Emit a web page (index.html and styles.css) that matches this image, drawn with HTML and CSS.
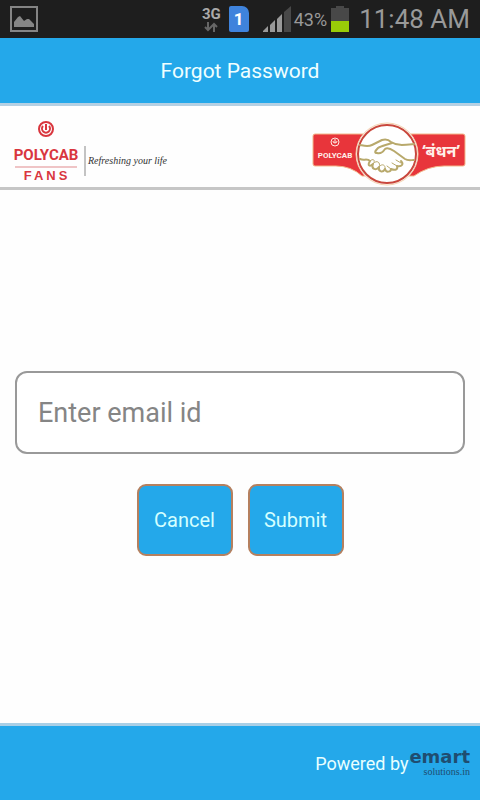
FILE: index.html
```html
<!DOCTYPE html>
<html lang="en">

<head>
    <meta charset="UTF-8">
    <meta name="viewport" content="width=device-width, initial-scale=1.0">
    <title>Forgot Password</title>
    <link rel="stylesheet" href="styles.css">
</head>

<body>
    <!-- Status bar -->
    <div class="status-bar">
        <svg class="status-picture" width="28" height="26" viewBox="0 0 28 26">
            <rect x="1" y="1" width="26" height="24" fill="none" stroke="#858585" stroke-width="2" />
            <path d="M4 21V16L8 11L10 10L14 15L17 13L19 13L21 15L24 18V21Z" fill="#858585" />
        </svg>
        <div class="network">
            <span>3G</span>
            <svg width="16" height="10" viewBox="0 0 16 10">
                <path d="M5 0V8M2 5L5 8L8 5M11 10V2M8 5L11 2L14 5" fill="none" stroke="#666" stroke-width="2" />
            </svg>
        </div>
        <div class="sim">1</div>
        <svg class="signal" width="28" height="26" viewBox="0 0 28 26">
            <path d="M0 26V25L5 20V26Z" fill="#999" />
            <path d="M7 26V19L12 14V26Z" fill="#999" />
            <path d="M14 26V13L19 8V26Z" fill="#999" />
            <path d="M21 26V6L28 0V26Z" fill="#484848" />
        </svg>
        <span class="percent">43%</span>
        <svg class="battery" width="18" height="26" viewBox="0 0 18 26">
            <path d="M5 0H13V2H18V15H0V2H5Z" fill="#484848" />
            <rect y="15" width="18" height="11" fill="#99cc08" />
        </svg>
        <span class="clock">11:48 AM</span>
    </div>

    <!-- Header -->
    <header>
        <h1>Forgot Password</h1>
    </header>

    <!-- Logos -->
    <div class="logos">
        <svg class="fans-logo" width="160" height="66" viewBox="0 0 160 66" role="img" aria-label="Polycab Fans, refreshing your life">
            <circle cx="32" cy="8" r="7" fill="none" stroke="#d9363e" stroke-width="2" />
            <path d="M29 5A4 4 0 1 0 35 5M32 3V9" fill="none" stroke="#d9363e" stroke-width="2" />
            <text class="fans-name" x="32" y="39">POLYCAB</text>
            <path d="M1 46H63" stroke="#e08a8d" />
            <text class="fans-sub" x="33" y="59">FANS</text>
            <path d="M71 25V55" stroke="#888" />
            <text class="fans-line" x="74" y="43">Refreshing your life</text>
        </svg>
        <svg class="bandhan-logo" width="154" height="66" viewBox="0 0 154 66" role="img" aria-label="Polycab Bandhan">
            <path d="M3 13H151Q153 13 153 15V43Q153 45 151 45H132Q116 45 102 55H50Q39 45 24 45H3Q1 45 1 43V15Q1 13 3 13Z" fill="#e8353b" stroke="#f3b98c" />
            <circle cx="75" cy="33" r="31" fill="#fff" stroke="#f5d2b0" />
            <circle cx="75" cy="33" r="29" fill="#fff" stroke="#c9473c" stroke-width="2" />
            <g fill="none" stroke="#b8a96c" stroke-linecap="round" stroke-linejoin="round">
                <path stroke-width="2" d="M48 24C53 25 56 26 60 24L70 19C73 18 76 18 79 21C85 25 92 24 102 23" />
                <path stroke-width="2" d="M80 22C74 24 68 25 66 27C63 30 62 32 65 32C68 33 71 31 73 28C76 26 79 28 82 30L93 38C96 40 99 39 102 39" />
                <path stroke-width="2" d="M48 38C52 40 55 37 58 40C55 45 58 46 61 43C59 48 64 50 67 46C66 51 71 52 73 48C74 52 79 51 79 48C84 50 86 48 85 45C90 46 92 43 89 40" />
                <path d="M58 40C61 37 64 39 61 43C65 38 69 42 67 46C70 42 74 44 73 48M75 45L79 48M80 42L85 45M84 39L89 42" />
            </g>
            <circle cx="23" cy="21" r="4" fill="none" stroke="#ffe9e2" />
            <path d="M21 20A2 2 0 1 0 25 20M23 18V22" fill="none" stroke="#ffe9e2" />
            <text class="bandhan-name" x="23" y="37">POLYCAB</text>
            <text class="bandhan-word" x="129" y="36">‘बंधन’</text>
        </svg>
    </div>

    <!-- Form -->
    <main>
        <form class="forgot-form">
            <input type="email" id="email" name="email" placeholder="Enter email id" aria-label="Enter email id">
            <div class="buttons">
                <button type="reset">Cancel</button>
                <button type="submit">Submit</button>
            </div>
        </form>
    </main>

    <!-- Footer -->
    <footer>
        <span>Powered by</span>
        <div class="emart">
            <b>emart</b>
            <small>solutions.in</small>
        </div>
    </footer>
</body>

</html>
```

FILE: styles.css
```css
body {
    font-family: Roboto, sans-serif;
    margin: 0;
    min-height: 100vh;
    background: #fefefe;
    display: flex;
    flex-direction: column;
}

/* Status bar */
.status-bar {
    height: 38px;
    padding: 0 10px;
    box-sizing: border-box;
    background: #1e1e1e;
    color: #999;
    display: flex;
    align-items: center;
}

.status-picture {
    margin-right: auto;
}

.network {
    display: flex;
    flex-direction: column;
    align-items: center;
    font-size: 15px;
    font-weight: bold;
    line-height: 15px;
    color: #aaa;
}

.sim {
    width: 20px;
    height: 26px;
    margin: 0 14px 0 8px;
    background: #3f83dc;
    border-radius: 2px 7px 2px 2px;
    color: white;
    font-size: 17px;
    font-weight: bold;
    line-height: 26px;
    text-align: center;
}

.percent {
    margin: 0 4px 0 3px;
    font-size: 18px;
}

.clock {
    margin-left: 10px;
    font-size: 26px;
}

/* Header */
header {
    height: 65px;
    background: #24a8ea;
    border-bottom: 3px solid #b5d0e3;
    display: flex;
    align-items: center;
    justify-content: center;
}

h1 {
    margin: 0;
    color: #f0ffff;
    font-size: 21px;
    font-weight: normal;
}

/* Logos */
.logos {
    height: 81px;
    padding: 0 14px;
    border-bottom: 3px solid #c6c6c6;
    display: flex;
    align-items: flex-end;
    justify-content: space-between;
}

.fans-name,
.fans-sub,
.bandhan-name,
.bandhan-word {
    font-family: Roboto, sans-serif;
    font-weight: bold;
    text-anchor: middle;
}

.fans-name {
    fill: #d9363e;
    font-size: 15px;
}

.fans-sub {
    fill: #d9363e;
    font-family: "Liberation Sans", sans-serif;
    font-size: 13px;
    letter-spacing: 3px;
}

.fans-line {
    fill: #333;
    font-family: "Liberation Serif", serif;
    font-size: 10px;
    font-style: italic;
}

.bandhan-name {
    fill: #fff0ea;
    font-size: 8px;
}

.bandhan-word {
    fill: #fff0ea;
    font-family: "Noto Sans", "Noto Sans Devanagari", sans-serif;
    font-size: 16px;
}

/* Form */
main {
    flex: 1;
    display: flex;
    flex-direction: column;
    justify-content: center;
    padding: 0 15px;
}

.forgot-form {
    margin-top: 14px;
}

input[type="email"] {
    width: 100%;
    height: 83px;
    box-sizing: border-box;
    padding: 0 21px;
    border: 2px solid #999;
    border-radius: 12px;
    background: white;
    font-family: inherit;
    font-size: 27px;
}

input::placeholder {
    color: #858585;
}

.buttons {
    display: flex;
    justify-content: center;
    gap: 15px;
    margin-top: 30px;
}

button {
    width: 96px;
    height: 72px;
    padding: 0;
    background: #24a8ea;
    color: #d4ffff;
    border: 2px solid #b5805f;
    border-radius: 9px;
    font-family: inherit;
    font-size: 20px;
    cursor: pointer;
}

/* Footer */
footer {
    height: 74px;
    padding-right: 10px;
    background: #24a8ea;
    border-top: 3px solid #a9cfe6;
    color: #e8ffff;
    font-size: 18px;
    display: flex;
    align-items: center;
    justify-content: flex-end;
    gap: 1px;
}

.emart {
    display: flex;
    flex-direction: column;
    align-items: flex-end;
    color: #1f4d70;
}

.emart b {
    font-family: "DejaVu Sans", sans-serif;
    font-size: 18px;
    line-height: 18px;
}

.emart small {
    font-family: "Liberation Serif", serif;
    font-size: 10px;
    line-height: 12px;
}
```
